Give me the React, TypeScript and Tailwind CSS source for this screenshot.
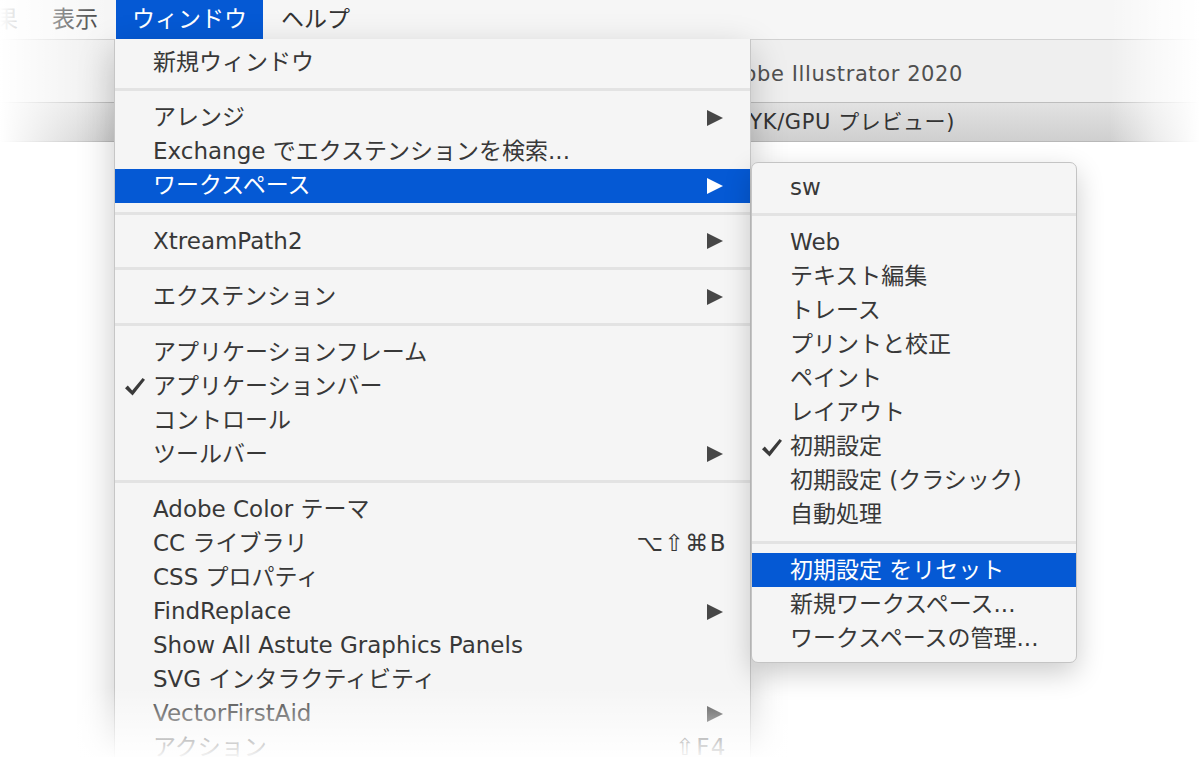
import React from "react";

type Row =
  | "sep"
  | { label: string; check?: boolean; arrow?: boolean; shortcut?: string; active?: boolean };

const mainItems: Row[] = [
  { label: "新規ウィンドウ" },
  "sep",
  { label: "アレンジ", arrow: true },
  { label: "Exchange でエクステンションを検索..." },
  { label: "ワークスペース", arrow: true, active: true },
  "sep",
  { label: "XtreamPath2", arrow: true },
  "sep",
  { label: "エクステンション", arrow: true },
  "sep",
  { label: "アプリケーションフレーム" },
  { label: "アプリケーションバー", check: true },
  { label: "コントロール" },
  { label: "ツールバー", arrow: true },
  "sep",
  { label: "Adobe Color テーマ" },
  { label: "CC ライブラリ", shortcut: "⌥⇧⌘B" },
  { label: "CSS プロパティ" },
  { label: "FindReplace", arrow: true },
  { label: "Show All Astute Graphics Panels" },
  { label: "SVG インタラクティビティ" },
  { label: "VectorFirstAid", arrow: true },
  { label: "アクション", shortcut: "⇧F4" },
];

const subItems: Row[] = [
  { label: "sw" },
  "sep",
  { label: "Web" },
  { label: "テキスト編集" },
  { label: "トレース" },
  { label: "プリントと校正" },
  { label: "ペイント" },
  { label: "レイアウト" },
  { label: "初期設定", check: true },
  { label: "初期設定 (クラシック)" },
  { label: "自動処理" },
  "sep",
  { label: "初期設定 をリセット", active: true },
  { label: "新規ワークスペース..." },
  { label: "ワークスペースの管理..." },
];

function Check({ white }: { white?: boolean }) {
  return (
    <svg width="22" height="20" viewBox="0 0 22 20" className={white ? "fill-white" : "fill-[#3a3a3a]"}>
      <path d="M1 11.2 L3.8 8.6 L8.2 13.4 L18.6 1 L21 2.8 L8.6 18.6 Z" />
    </svg>
  );
}

function Arrow({ white }: { white?: boolean }) {
  return (
    <svg width="16" height="16" viewBox="0 0 16 16" className={white ? "fill-white" : "fill-[#474747]"}>
      <polygon points="0,0 16,8 0,16" />
    </svg>
  );
}

function MenuRows({ rows }: { rows: Row[] }) {
  return (
    <>
      {rows.map((r, i) =>
        r === "sep" ? (
          <div key={i} className="h-[21.5px] flex items-center">
            <div className="h-[3px] w-full bg-[#e3e3e3]" />
          </div>
        ) : (
          <div
            key={i}
            className={
              "relative h-[34px] flex items-center pl-[38px] " +
              (r.shortcut ? "pr-[23px] " : "pr-[27px] ") +
              (r.active ? "bg-[#0559d4] text-white" : "text-[#383838]")
            }
          >
            {r.check && (
              <span className="absolute left-[9px] top-[8px]">
                <Check white={r.active} />
              </span>
            )}
            <span className="flex-1 whitespace-nowrap">{r.label}</span>
            {r.shortcut && <span className="whitespace-nowrap tracking-[1.5px]">{r.shortcut}</span>}
            {r.arrow && <Arrow white={r.active} />}
          </div>
        )
      )}
    </>
  );
}

export default function App() {
  return (
    <div className="relative w-[1200px] h-[757px] overflow-hidden bg-white text-[23px] leading-none font-['DejaVu_Sans','Noto_Sans_CJK_JP',sans-serif]">
      {/* menu bar */}
      <div className="h-[39px] flex items-stretch bg-[#f6f6f6] text-[#333] -ml-[44px]">
        <div className="px-[16px] flex items-center">効果</div>
        <div className="ml-[2px] px-[16px] flex items-center">表示</div>
        <div className="ml-[2px] px-[16px] flex items-center bg-[#0559d4] text-white">ウィンドウ</div>
        <div className="ml-[2px] px-[16px] flex items-center">ヘルプ</div>
      </div>

      {/* document window title bar */}
      <div className="h-[64px] border-t border-b border-t-[#d2d2d2] border-b-[#bdbdbd] bg-[#efefef] flex items-center justify-end pr-[237px] pt-[6px] text-[21px] tracking-[0.6px] text-[#505050]">
        Adobe Illustrator 2020
      </div>
      {/* document tab bar */}
      <div className="h-[39px] border-b border-[#b8b8b8] bg-linear-to-b from-[#e2e2e2] to-[#cfcfcf] flex items-center justify-end pr-[245px] text-[21px] tracking-[0.6px] text-[#333]">
        名称未設定-1 @ 100% (CMYK/GPU プレビュー)
      </div>

      {/* edge fades */}
      <div className="absolute left-0 top-0 h-[146px] w-[110px] bg-linear-to-r from-white via-white/50 to-transparent" />
      <div className="absolute right-0 top-0 h-[146px] w-[90px] bg-linear-to-l from-white via-white/60 to-transparent" />

      {/* window menu */}
      <div className="absolute left-[114px] top-[39px] w-[637px] pt-[6px] bg-[#f5f5f5] border-l border-r border-[#c6c6c6] shadow-[0_12px_34px_rgba(0,0,0,0.22)]">
        <MenuRows rows={mainItems} />
      </div>

      {/* workspace submenu */}
      <div className="absolute left-[751px] top-[162px] w-[326px] py-[7px] bg-[#f5f5f5] border border-[#c4c4c4] rounded-[7px] overflow-hidden shadow-[0_10px_28px_rgba(0,0,0,0.2)]">
        <MenuRows rows={subItems} />
      </div>

      {/* bottom fade */}
      <div className="absolute left-0 bottom-0 w-full h-[70px] bg-linear-to-b from-transparent to-white/95" />
    </div>
  );
}
